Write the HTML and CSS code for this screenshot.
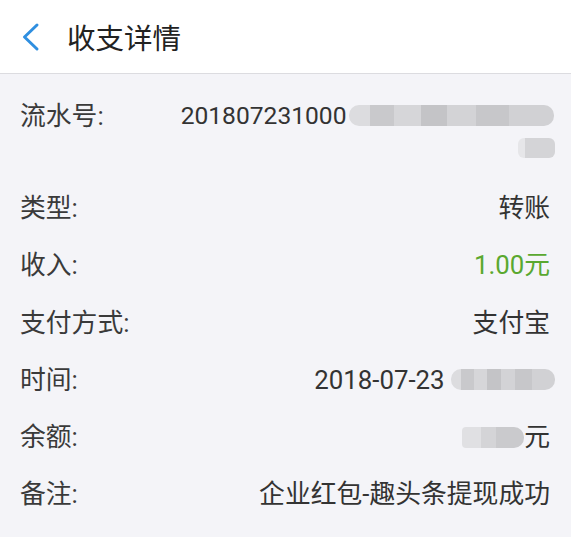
FILE: index.html
```html
<!DOCTYPE html>
<html lang="zh-CN">
<head>
  <meta charset="UTF-8">
  <title>收支详情</title>
  <link rel="stylesheet" href="styles.css">
</head>
<body>

<header class="topbar">
  <a href="#" class="back">
    <svg width="20" height="30" viewBox="0 0 20 30"><path d="M17 3 L4.5 15 L17 27" fill="none" stroke="#2f8fe0" stroke-width="3" stroke-linecap="round" stroke-linejoin="round"/></svg>
  </a>
  <h1>收支详情</h1>
</header>

<div class="detail">
  <div class="row serial">
    <span class="label">流水号:</span>
    <span class="value">201807231000<span class="blur blur-long"></span><br><span class="blur blur-tail"></span></span>
  </div>
  <div class="row">
    <span class="label">类型:</span>
    <span class="value">转账</span>
  </div>
  <div class="row">
    <span class="label">收入:</span>
    <span class="value income">1.00元</span>
  </div>
  <div class="row">
    <span class="label">支付方式:</span>
    <span class="value">支付宝</span>
  </div>
  <div class="row">
    <span class="label">时间:</span>
    <span class="value">2018-07-23 <span class="blur blur-time"></span></span>
  </div>
  <div class="row">
    <span class="label">余额:</span>
    <span class="value"><span class="blur blur-money"></span>元</span>
  </div>
  <div class="row">
    <span class="label">备注:</span>
    <span class="value">企业红包-趣头条提现成功</span>
  </div>
</div>

</body>
</html>
```

FILE: styles.css
```css
body {
  margin: 0;
  background: #f4f4f8;
  font-family: Roboto, "Noto Sans CJK SC", sans-serif;
  color: #333;
}
.topbar {
  background: #fff;
  height: 73px;
  border-bottom: 1px solid #dcdce0;
  display: flex;
  align-items: center;
  padding-left: 20px;
}
.back {
  display: flex;
  width: 20px;
  margin-right: 27px;
}
.topbar h1 {
  margin: 0;
  font-size: 28.5px;
  font-weight: normal;
  color: #222;
}
.detail {
  padding: 13px 21px 0 20px;
}
.row {
  display: flex;
  justify-content: space-between;
  font-size: 25.8px;
  line-height: 32px;
  padding: 12.6px 0;
}
.row.serial {
  padding-bottom: 22px;
}
.label {
  color: #3a3a3a;
  white-space: nowrap;
}
.value {
  text-align: right;
  white-space: nowrap;
}
.serial .value {
  flex: 1;
  margin-left: 77px;
  margin-right: -5px;
  text-align: left;
  font-size: 24.6px;
}
.serial .value .blur-tail {
  float: right;
}
.income {
  color: #5aa830;
}
.blur {
  display: inline-block;
  vertical-align: middle;
  height: 21px;
  border-radius: 10px;
  background: linear-gradient(90deg, #dcdcdf 0 10%, #c9c9cc 10% 22%, #d6d6d9 22% 35%, #c4c4c7 35% 48%, #d3d3d6 48% 62%, #c7c7ca 62% 78%, #d1d1d4 78% 100%);
}
.blur-long {
  width: 205px;
  margin-top: -4px;
  margin-left: 2px;
}
.blur-tail {
  width: 37px;
  height: 20px;
  margin-top: 6px;
  border-radius: 6px;
  background: linear-gradient(90deg, #e6e6e9 0 20%, #d4d4d7 20% 100%);
}
.blur-time {
  width: 104px;
  margin-top: -4px;
  margin-right: -5px;
}
.blur-money {
  width: 62px;
  margin-top: -4px;
  border-radius: 4px 10px 10px 4px;
  background: linear-gradient(90deg, #e0e0e3 0 30%, #d4d4d7 30% 55%, #cacacd 55% 100%);
}
```
